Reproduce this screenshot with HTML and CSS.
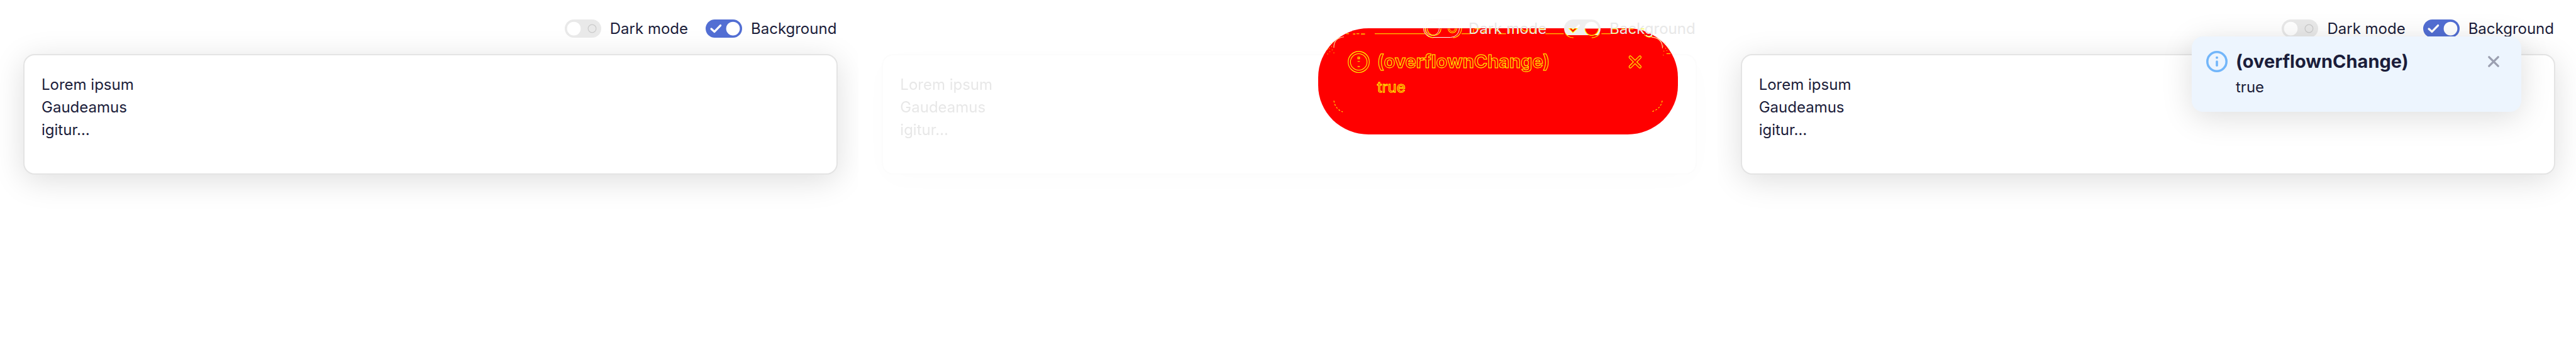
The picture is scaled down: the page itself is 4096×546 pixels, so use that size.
FILE: index.html
```html
<!DOCTYPE html>
<html lang="en">
<head>
<meta charset="utf-8">
<title>overflownChange</title>
<link rel="stylesheet" href="styles.css">
</head>
<body>
<main class="panels">
  <section class="panel">
    <header class="options">
      <label class="option"><span class="switch"><input type="checkbox"><svg viewBox="0 0 64 32"><circle cx="16" cy="16" r="12" fill="#fff"/><circle cx="48" cy="16" r="7" fill="none" stroke="#cacaca" stroke-width="1.3"/></svg></span>Dark mode</label>
      <label class="option"><span class="switch"><input type="checkbox" checked><svg viewBox="0 0 64 32"><circle cx="48" cy="16" r="12" fill="#fff"/><path d="M10 16.500l5.500 5L26 10.500" fill="none" stroke="#fff" stroke-width="3.600" stroke-linecap="round" stroke-linejoin="round"/></svg></span>Background</label>
    </header>
    <article class="card"><p class="text">Lorem ipsum<br>Gaudeamus<br>igitur…</p></article>
  </section>

  <section class="panel diff">
    <header class="options">
      <label class="option"><span class="switch"><input type="checkbox"><svg viewBox="0 0 64 32"><circle cx="16" cy="16" r="12" fill="none" stroke="#fafafa"/></svg></span>Dark mode</label>
      <label class="option"><span class="switch"><input type="checkbox" checked><svg viewBox="0 0 64 32"><circle cx="48" cy="16" r="12" fill="#fff"/><path d="M10 16.500l5.500 5L26 10.500" fill="none" stroke="#fff" stroke-width="3.600" stroke-linecap="round" stroke-linejoin="round"/></svg></span>Background</label>
    </header>
    <article class="card"><p class="text">Lorem ipsum<br>Gaudeamus<br>igitur…</p></article>
    <aside class="toast">
      <div class="blob"></div>
      <svg class="marks" viewBox="801 49 630 186" fill="none" stroke="#ff0" stroke-width="1.200">
        <path d="M900 58.500H988M1052 58.500h16M1116 58.500h14M1199 58.500h32M1297 58.500h16M850 58.500h5M862 59h4M868 58.500h5M876 59h7"/>
        <path d="M1075 50h10M1073 50v8M1088 57l6-4M1100 50h5M1112 50l3 5M1136 50v8M1143 50v8M1152 50v8M1158 50q6 8 10 0M1172 50v8M1180 50v8M1187 50h10M1316 50h9M1316 57.500h8M1332 50h6M1345 50h8M1350 57h4M1366 50h6M1372 60q8 7 14 3"/>
        <path d="M988 49A16 16 0 0 0 1003 65.500M1052 49A16 16 0 0 1 1037 65.500M992 49.500A12 12 0 0 0 1016 49.500M1028.500 49.500A7.500 7.500 0 0 0 1043.500 49.500M1031 49.500A5 5 0 0 0 1041 49.500"/>
        <path d="M1234.500 61H1293.500Q1289 66.500 1280 66.500H1248Q1239 66.500 1234.500 61Z" fill="red" stroke="none"/>
        <path d="M1234 58Q1239 65.500 1248 65.500M1294 58Q1289 65.500 1280 65.500"/>
        <path d="M1268 49.500H1292A12 12 0 0 1 1268 49.500Z" fill="red" stroke="none"/>
        <path d="M1268 49.500A12 12 0 0 0 1292 49.500"/>
        <path d="M1240 49h5l2 2.500 3-2.500h5l-8 7.500z" fill="red"/>
        <path d="M828.500 176Q831 191 844 195.500M1403.500 176Q1401 191 1384 195.500" stroke-dasharray="3 3"/>
        <path d="M828.500 83Q828 66 846 64M1385 64.500Q1404 66 1404 84" stroke="#ffe9a0"/>
        <path d="M817 94h1M821 90h1M825 87h1M820 84h1M824 81h1M828 92h1M817 86h1M822 76h1M826 74h1M1405 80h1M1409 84h1M1413 82h1M1406 89h1M1411 88h1M1415 85h1M1405 96h1M1411 93.500h7M1408 75h1"/>
        <circle cx="872" cy="108" r="18.500"/><circle cx="872" cy="108" r="14.500"/><rect x="870.500" y="99.500" width="3" height="3"/><path d="M870 107h4M870 116h4"/>
        <path d="M1347.500 99.500l17 17m0-17l-17 17" stroke-width="5.400" stroke-linecap="round"/><path d="M1347.500 99.500l17 17m0-17l-17 17" stroke="red" stroke-width="3" stroke-linecap="round"/>
      </svg>
      <span class="icon"></span>
      <div class="message"><h2 class="title">(overflownChange)</h2><p class="text">true</p></div>
      <button class="close" type="button" aria-label="Close"></button>
    </aside>
  </section>

  <section class="panel">
    <header class="options">
      <label class="option"><span class="switch"><input type="checkbox"><svg viewBox="0 0 64 32"><circle cx="16" cy="16" r="12" fill="#fff"/><circle cx="48" cy="16" r="7" fill="none" stroke="#cacaca" stroke-width="1.3"/></svg></span>Dark mode</label>
      <label class="option"><span class="switch"><input type="checkbox" checked><svg viewBox="0 0 64 32"><circle cx="48" cy="16" r="12" fill="#fff"/><path d="M10 16.500l5.500 5L26 10.500" fill="none" stroke="#fff" stroke-width="3.600" stroke-linecap="round" stroke-linejoin="round"/></svg></span>Background</label>
    </header>
    <article class="card"><p class="text">Lorem ipsum<br>Gaudeamus<br>igitur…</p></article>
    <aside class="toast filled">
      <svg class="icon" viewBox="0 0 38 38"><circle cx="19" cy="19" r="17" fill="none" stroke="#72b6fa" stroke-width="4"/><circle cx="19" cy="12" r="2.200" fill="#72b6fa"/><path d="M19 19v7" stroke="#72b6fa" stroke-width="4" stroke-linecap="round"/></svg>
      <div class="message"><h2 class="title">(overflownChange)</h2><p class="text">true</p></div>
      <button class="close" type="button" aria-label="Close"><svg viewBox="0 0 20 20"><path d="M2 2l16 16M18 2L2 18" stroke="#9b9fb0" stroke-width="3.600" stroke-linecap="round"/></svg></button>
    </aside>
  </section>
</main>
</body>
</html>
```
FILE: styles.css
```css
* { box-sizing: border-box; }

body {
  margin: 0;
  background: #fff;
  color: #1b1d3a;
  font-family: Inter, "Open Sans", sans-serif;
  font-size: 24px;
}

h2, p { margin: 0; }

.panels {
  display: grid;
  grid-template-columns: repeat(3, 1fr);
  min-height: 100vh;
}

.panel {
  position: relative;
  overflow: hidden;
  padding: 31px 33px 0 37px;
}

.options {
  display: flex;
  justify-content: flex-end;
  gap: 28px;
  position: relative;
  z-index: 2;
  margin-bottom: 26px;
  padding-right: 2px;
}

.option {
  display: flex;
  align-items: center;
  gap: 14px;
  line-height: 29px;
}

.switch {
  position: relative;
  width: 58px;
  height: 29px;
}

.switch input {
  appearance: none;
  display: block;
  width: 100%;
  height: 100%;
  margin: 0;
  border-radius: 15px;
  background: #e9e9e9;
}

.switch input:checked { background: #526ed3; }

.switch svg {
  position: absolute;
  inset: 0;
  width: 100%;
  height: 100%;
}

.card {
  min-height: 192px;
  padding: 29px 27px 51px;
  border: 2px solid #e4e4e4;
  border-radius: 18px;
  background: #fff;
  box-shadow: 0 9px 50px rgba(0, 0, 0, 0.135);
}

.text { line-height: 36px; }

.toast {
  position: absolute;
  top: 58px;
  right: 87px;
  display: flex;
  align-items: flex-start;
  width: 524px;
  padding: 23px 35px 21px 23px;
  border-radius: 18px;
}

.toast.filled {
  z-index: 3;
  background: #edf5fe;
  box-shadow: 0 9px 50px rgba(0, 0, 0, 0.135);
}

.icon {
  flex: none;
  width: 34px;
  height: 34px;
}

.message {
  flex: 1;
  margin-left: 13px;
}

.title {
  margin-bottom: 6px;
  font-size: 29px;
  font-weight: 700;
  line-height: 34px;
}

.close {
  width: 18px;
  height: 18px;
  margin-top: 8px;
  padding: 0;
  border: 0;
  background: none;
}

.close svg {
  display: block;
  width: 100%;
  height: 100%;
}

.diff .options { color: #e8e8e8; }
.diff .switch input { background: transparent; border: 1px solid #fcfcfc; }
.diff .switch input:checked { background: #eee; border: 0; }
.diff .card { opacity: 0.1; filter: grayscale(1); }

.diff .message {
  position: relative;
  z-index: 3;
  color: red;
  -webkit-text-stroke: 1px #ff0;
}

.blob, .marks {
  position: absolute;
  inset: -13px -24px -36px;
}

.blob {
  z-index: 1;
  border-radius: 80px / 78px;
  background: red;
}

.marks {
  z-index: 3;
  width: 572px;
  height: 169px;
}
```
